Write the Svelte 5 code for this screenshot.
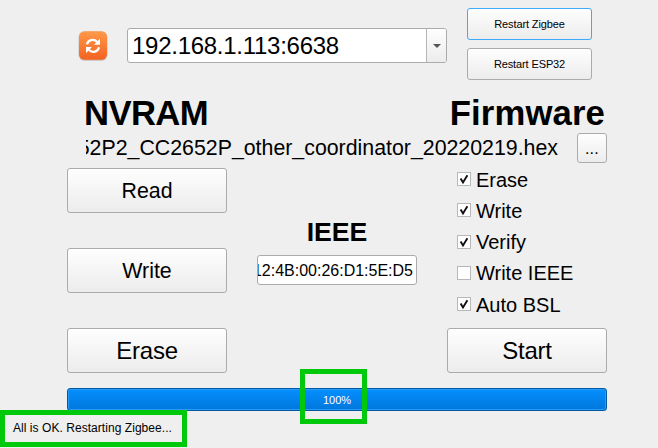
<script>
  const options = [
    { label: 'Erase', checked: true },
    { label: 'Write', checked: true },
    { label: 'Verify', checked: true },
    { label: 'Write IEEE', checked: false },
    { label: 'Auto BSL', checked: true }
  ];
</script>

<div class="window">
  <header>
    <button class="refresh" aria-label="Refresh">
      <svg width="30" height="32" viewBox="0 0 30 32">
        <defs>
          <linearGradient id="orange" x2="0" y2="1">
            <stop stop-color="#ff9a4b" />
            <stop offset="1" stop-color="#f3621f" />
          </linearGradient>
        </defs>
        <rect x=".5" y="1.6" width="29" height="29.4" rx="6" fill="#cfcac7" />
        <rect x="1" y="1.2" width="28" height="28.6" rx="5.5" fill="url(#orange)" />
        <g fill="none" stroke="#fff" stroke-width="2.2">
          <path d="M9 14.4C9.8 10 15.6 8.2 19.3 12" />
          <path d="M21 17.3C20.2 21.7 14.4 23.5 10.7 19.7" />
        </g>
        <path d="M22 8.8v5.9h-6zM8 22.9V17h6z" fill="#fff" />
      </svg>
    </button>
    <div class="combo">
      <span>192.168.1.113:6638</span>
      <div class="arrow"><svg width="8" height="4" viewBox="0 0 8 4"><path d="M0 0h8L4 4z" fill="#555" /></svg></div>
    </div>
    <div class="restarts">
      <button class="small focus">Restart Zigbee</button>
      <button class="small">Restart ESP32</button>
    </div>
  </header>

  <div class="titles">
    <h1 class="nvram">NVRAM</h1>
    <h1 class="firmware">Firmware</h1>
  </div>

  <div class="file">
    <div class="path"><span>52P2_CC2652P_other_coordinator_20220219.hex</span></div>
    <button class="browse">...</button>
  </div>

  <main>
    <div class="actions">
      <button class="mid">Read</button>
      <button class="mid">Write</button>
      <button>Erase</button>
    </div>
    <div class="ieee">
      <h2>IEEE</h2>
      <div class="field"><span>12:4B:00:26:D1:5E:D5</span></div>
    </div>
    <div class="flash">
      <div class="options">
        {#each options as option}
          <div class="option">
            <span class="box">
              {#if option.checked}
                <svg width="12" height="12" viewBox="0 0 12 12"><path d="M2.6 5.4L5 9.4 9.4 2.2" fill="none" stroke="#111" stroke-width="1.9" /></svg>
              {/if}
            </span>
            <span class="label">{option.label}</span>
          </div>
        {/each}
      </div>
      <button>Start</button>
    </div>
  </main>

  <div class="progress">100%<div class="mark percent-mark"></div></div>
  <footer><span>All is OK. Restarting Zigbee...</span><div class="mark status-mark"></div></footer>
</div>

<style>
  :global(body) { background: #efefef; }
  .window {
    width: 658px; height: 448px; box-sizing: border-box; padding: 8px 51px 0 67px;
    background: #efefef; color: #000; overflow: hidden; position: relative;
    font-family: "Liberation Sans", Arial, sans-serif; font-size: 11px; white-space: nowrap;
  }
  button {
    box-sizing: border-box; display: block; width: 160px; height: 45px; padding: 0;
    border: 1px solid #ababab; border-radius: 3px; color: #000;
    background: linear-gradient(#fefefe, #ececec); font: 24px "Liberation Sans", Arial, sans-serif;
    letter-spacing: -.2px;
  }
  .mid { padding-top: 2px; font-size: 21.33px; letter-spacing: 0; }
  header { display: flex; height: 72px; }
  .refresh { width: 30px; height: 32px; margin: 22px 19px 0 11px; border: 0; background: none; }
  .refresh svg { display: block; }
  .combo {
    box-sizing: border-box; display: flex; justify-content: space-between; width: 320px; height: 35px;
    margin-top: 20px; padding-left: 4px; border: 1px solid #ababab; border-radius: 3px;
    background: #fff; font-size: 24px; line-height: 33px; letter-spacing: -.27px; overflow: hidden;
  }
  .arrow {
    display: flex; align-items: center; justify-content: center; width: 19px;
    border-left: 1px solid #b5b5b5; background: linear-gradient(#fefefe, #ececec);
  }
  .restarts { display: flex; flex-direction: column; gap: 8px; margin-left: 20px; }
  .small { width: 125px; height: 32px; font-size: 11px; letter-spacing: -.12px; }
  .focus { border-color: #3daafb; }
  .titles { display: flex; justify-content: space-between; height: 53px; padding: 13px 2px 0 17px; box-sizing: border-box; }
  h1 { margin: 0; font-size: 34.67px; line-height: 40px; }
  .nvram { letter-spacing: -.6px; }
  .firmware { letter-spacing: .15px; }
  .file { display: flex; justify-content: space-between; height: 30px; }
  .path { display: flex; justify-content: flex-end; width: 472px; margin-left: 19px; overflow: hidden; font-size: 21.33px; line-height: 30px; }
  .browse { width: 30px; height: 30px; font-size: 16px; padding-top: 2px; letter-spacing: .3px; }
  main { display: flex; gap: 30px; height: 205px; margin-top: 5px; }
  .actions { display: flex; flex-direction: column; gap: 35px; }
  .ieee { width: 160px; padding-top: 49px; }
  h2 { height: 38px; margin: 0; font-size: 26.67px; line-height: 30px; text-align: center; }
  .field {
    box-sizing: border-box; height: 30px; border: 1px solid #ababab; border-radius: 3px;
    padding-right: 3px; background: #fff; font-size: 16px; line-height: 30px;
    display: flex; justify-content: flex-end; overflow: hidden;
  }
  .flash { display: flex; flex-direction: column; justify-content: space-between; }
  .options { padding: 0 0 0 10px; margin-top: -4.4px; }
  .option { display: flex; align-items: center; height: 31.25px; font-size: 20px; }
  .box { box-sizing: border-box; width: 14px; height: 14px; margin-right: 5px; border: 1px solid #b8b8b8; background: #fff; }
  .box svg { display: block; }
  .label { line-height: 30px; padding-top: 1px; }
  .progress {
    position: relative; box-sizing: border-box; height: 23px; margin-top: 15px;
    border: 1px solid #0059a0; border-radius: 3px; box-shadow: inset 0 0 0 1px #279bfa;
    background: linear-gradient(#058fff, #0077dc); color: #fff; text-align: center; line-height: 22px;
  }
  footer { margin-left: -54px; margin-top: 10px; line-height: 14px; font-size: 12px; letter-spacing: .05px; }
  .mark { position: absolute; box-sizing: border-box; border: 5px solid #00c80a; }
  .percent-mark { left: 232px; top: -20px; width: 67px; height: 55px; }
  .status-mark { left: 0; top: 410px; width: 187px; height: 37px; }
</style>
